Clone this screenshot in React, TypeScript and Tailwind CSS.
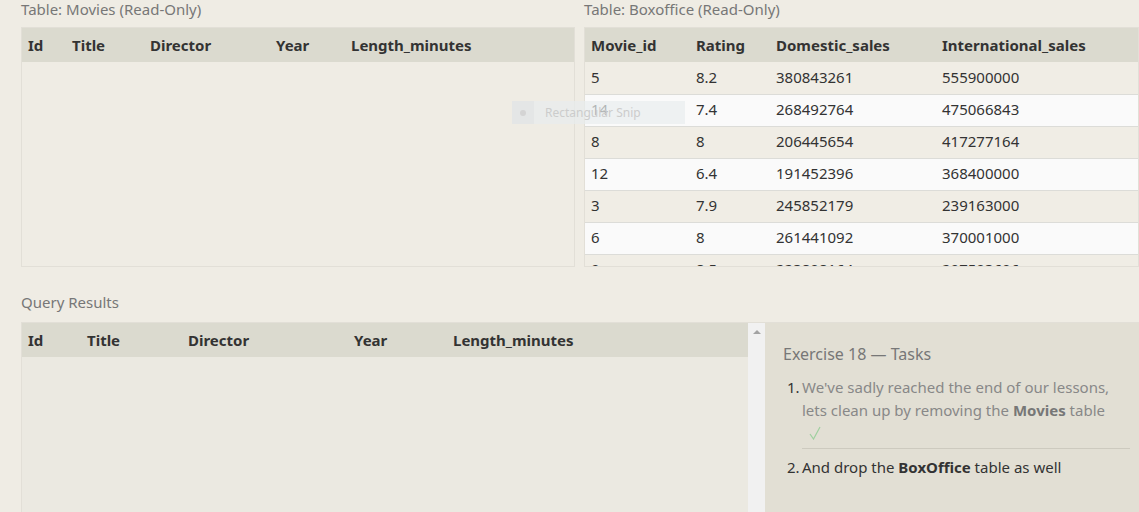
import React from 'react';

const movieCols = [
  { name: 'Id', w: 'w-[44px]' },
  { name: 'Title', w: 'w-[78px]' },
  { name: 'Director', w: 'w-[126px]' },
  { name: 'Year', w: 'w-[75px]' },
  { name: 'Length_minutes', w: '' },
];

const queryCols = [
  { name: 'Id', w: 'w-[59px]' },
  { name: 'Title', w: 'w-[101px]' },
  { name: 'Director', w: 'w-[166px]' },
  { name: 'Year', w: 'w-[99px]' },
  { name: 'Length_minutes', w: '' },
];

const boxCols = [
  { name: 'Movie_id', w: 'w-[105px]' },
  { name: 'Rating', w: 'w-[80px]' },
  { name: 'Domestic_sales', w: 'w-[166px]' },
  { name: 'International_sales', w: '' },
];

const boxoffice = [
  ['5', '8.2', '380843261', '555900000'],
  ['14', '7.4', '268492764', '475066843'],
  ['8', '8', '206445654', '417277164'],
  ['12', '6.4', '191452396', '368400000'],
  ['3', '7.9', '245852179', '239163000'],
  ['6', '8', '261441092', '370001000'],
  ['9', '8.5', '223808164', '297503696'],
  ['11', '8.4', '415004880', '648167031'],
];

type Col = { name: string; w: string };

const HeaderRow: React.FC<{ cols: Col[] }> = ({ cols }) => (
  <thead>
    <tr className="h-[34px] bg-[#dbdacf]">
      {cols.map((c) => (
        <th key={c.name} className={`${c.w} pl-[6px] text-left font-bold text-[#333]`}>
          {c.name}
        </th>
      ))}
    </tr>
  </thead>
);

const App: React.FC = () => {
  return (
    <div
      className="relative h-[512px] w-[1139px] overflow-hidden bg-[#efece4] text-[15px] text-[#333]"
      style={{ fontFamily: '"Noto Sans", "Open Sans", sans-serif' }}
    >
      <div className="flex gap-[9px] pl-[21px]">
        {/* Movies */}
        <div className="w-[554px]">
          <div className="h-[27px] leading-[19px] text-[#777]">Table: Movies (Read-Only)</div>
          <div className="h-[240px] border border-[#e2dfd7]">
            <table className="w-full border-collapse">
              <HeaderRow cols={movieCols} />
            </table>
          </div>
        </div>

        {/* Boxoffice */}
        <div className="flex-1">
          <div className="h-[27px] leading-[19px] text-[#777]">Table: Boxoffice (Read-Only)</div>
          <div className="h-[240px] overflow-hidden border border-[#e2dfd7]">
            <table className="w-full border-collapse">
              <HeaderRow cols={boxCols} />
              <tbody>
                {boxoffice.map((r, i) => (
                  <tr
                    key={r[0]}
                    className={`h-[32px] border-b border-[#dcdcd8] ${i % 2 ? 'bg-[#fafafa]' : 'bg-[#f0ede5]'}`}
                  >
                    {r.map((v, j) => (
                      <td key={j} className="pb-[1px] pl-[6px]">
                        {v}
                      </td>
                    ))}
                  </tr>
                ))}
              </tbody>
            </table>
          </div>
        </div>
      </div>

      {/* Query results */}
      <div className="pl-[21px] pt-[26px]">
        <div className="h-[29px] leading-[19px] text-[#777]">Query Results</div>
        <div className="flex h-[190px] border-t border-[#e2dfd7]">
          <div className="w-[727px] border-l border-[#e2dfd7] bg-[#ebe9e1]">
            <table className="w-full border-collapse">
              <HeaderRow cols={queryCols} />
            </table>
          </div>
          <div className="flex w-[17px] justify-center bg-[#f1f1f1] pt-[7px]">
            <div className="h-0 w-0 border-x-[4px] border-b-[4px] border-x-transparent border-b-[#a3a3a3]" />
          </div>
          <div className="flex-1 bg-[#e2dfd4] pl-[18px] pr-[9px] pt-[20px]">
            <div className="text-[16px] leading-[22px] text-[#777]">Exercise 18 — Tasks</div>
            <ol className="mt-[11px]">
              <li className="flex pb-[5px]">
                <span className="w-[19px] shrink-0 pl-[4px] text-[#333]">1.</span>
                <div className="flex-1 border-b border-[#cdcabf] pb-[4px]">
                  <div className="leading-[23px] text-[#888]">
                    We've sadly reached the end of our lessons, lets clean up by removing the{' '}
                    <b className="text-[#777]">Movies</b> table
                  </div>
                  <div className="flex h-[22px] items-center pl-[7px]">
                    <svg width="12" height="14" viewBox="0 0 12 14" fill="none">
                      <path d="M1 8 L4.5 13 L11 1" stroke="#9fd09f" strokeWidth="1.2" />
                    </svg>
                  </div>
                </div>
              </li>
              <li className="flex pt-[2px]">
                <span className="w-[19px] shrink-0 pl-[4px] text-[#333]">2.</span>
                <div className="flex-1 leading-[23px]">
                  And drop the <b>BoxOffice</b> table as well
                </div>
              </li>
            </ol>
          </div>
        </div>
      </div>

      {/* screen snip ghost overlay */}
      <div className="absolute left-[512px] top-[101px] flex h-[23px] w-[173px] items-center bg-[#e8ecee]/70 text-[12px] text-[#ccc]">
        <div className="flex h-full w-[22px] items-center justify-center bg-[#e4e6e6]">
          <div className="h-[6px] w-[6px] rounded-full bg-[#d4d4d4]" />
        </div>
        <span className="pl-[11px]">Rectangular Snip</span>
      </div>
    </div>
  );
};

export default App;
